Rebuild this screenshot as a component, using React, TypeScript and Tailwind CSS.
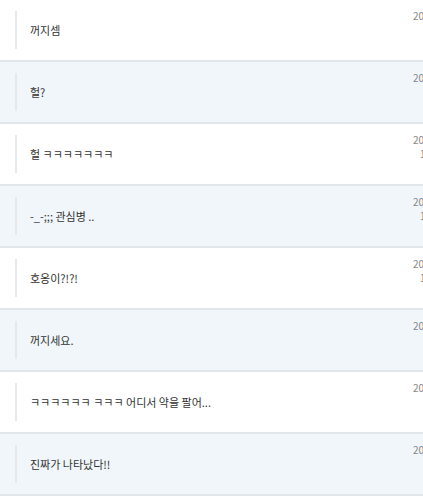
import React from "react";

const rows: { text: string; second: boolean }[] = [
  { text: "꺼지셈", second: false },
  { text: "헐?", second: false },
  { text: "헐 ㅋㅋㅋㅋㅋㅋㅋ", second: true },
  { text: "-_-;;; 관심병 ..", second: true },
  { text: "호옹이?!?!", second: true },
  { text: "꺼지세요.", second: false },
  { text: "ㅋㅋㅋㅋㅋㅋ ㅋㅋㅋ 어디서 약을 팔어...", second: false },
  { text: "진짜가 나타났다!!", second: false },
];

export default function App() {
  return (
    <div
      className="w-[423px] h-[500px] overflow-hidden bg-white"
      style={{ fontFamily: '"Noto Sans CJK KR", "Noto Sans", sans-serif' }}
    >
      {rows.map((r, i) => (
        <div
          key={i}
          className={`flex h-[62px] overflow-hidden border-b-2 border-[#e3e7ea] ${
            i % 2 === 1 ? "bg-[#f0f6fa]" : "bg-white"
          }`}
        >
          <div className="flex flex-1 items-center pl-[15px] py-[10px]">
            <div className="flex h-[38px] items-center border-l-2 border-[#e6e8ea] pl-[13px] text-[11px] text-[#333]">
              {r.text}
            </div>
          </div>
          <div className="w-[10px] shrink-0 pt-[9px] text-[10px] leading-[14px] text-[#888] whitespace-nowrap">
            <div>2012-05-20</div>
            {r.second && <div className="pl-[7px]">14:23</div>}
          </div>
        </div>
      ))}
    </div>
  );
}
